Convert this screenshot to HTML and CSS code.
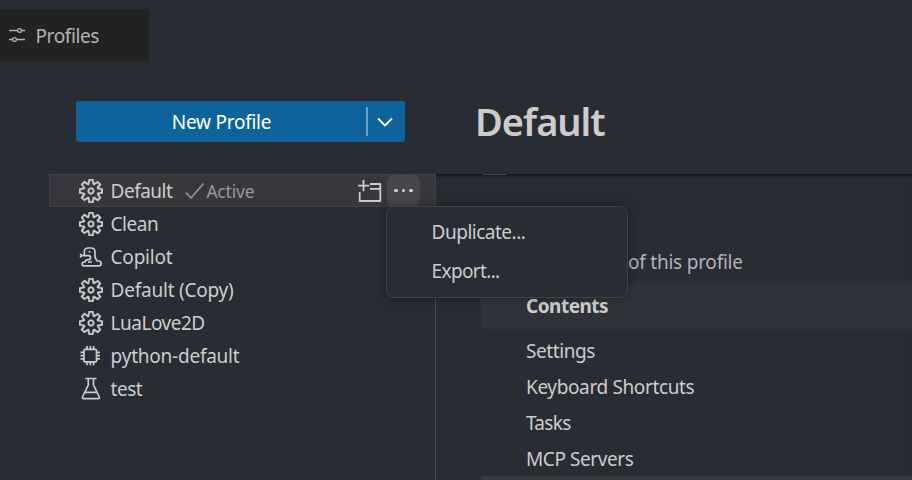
FILE: index.html
```
<!DOCTYPE html>
<html lang="en">
<head>
<meta charset="utf-8">
<title>Profiles</title>
<link rel="stylesheet" href="styles.css">
</head>
<body>
<svg class="defs" aria-hidden="true">
  <symbol id="gear" viewBox="1 1 14 14"><path fill="currentColor" stroke="currentColor" stroke-width=".15" fill-rule="evenodd" d="M9.1 4.4L8.6 2H7.4l-.5 2.4-.7.3-2-1.3-.9.8 1.3 2-.2.7-2.4.5v1.2l2.4.5.3.8-1.3 2 .8.8 2-1.3.8.3.4 2.3h1.2l.5-2.4.8-.3 2 1.3.8-.8-1.3-2 .3-.8 2.3-.4V7.4l-2.4-.5-.3-.8 1.3-2-.8-.8-2 1.3-.7-.2zM9.4 1l.5 2.4L12 2.1l2 2-1.4 2.1 2.4.4v2.8l-2.4.5L14 12l-2 2-2.1-1.4-.5 2.4H6.6l-.5-2.4L4 13.9l-2-2 1.4-2.1L1 9.4V6.6l2.4-.5L2.1 4l2-2 2.1 1.4.4-2.4h2.8zm.6 7c0 1.1-.9 2-2 2s-2-.9-2-2 .9-2 2-2 2 .9 2 2zM8 9c.6 0 1-.4 1-1s-.4-1-1-1-1 .4-1 1 .4 1 1 1z"/></symbol>
</svg>
<header class="tabs">
  <div class="tab">
    <svg class="tab-icon" viewBox="0 0 16 14"><path d="M0 2.5h8.5M12.5 2.5H16M0 11.5h3.5M7.5 11.5H16"/><circle cx="10.5" cy="2.5" r="1.9"/><circle cx="5.5" cy="11.5" r="1.9"/></svg>
    <span class="tab-label">Profiles</span>
  </div>
</header>
<main class="editor">
  <aside class="sidebar">
    <div class="new-profile">
      <span class="new-label">New Profile</span>
      <span class="new-drop"><svg class="chevron" viewBox="0 0 16 10"><path d="M1 1.5l7 7 7-7"/></svg></span>
    </div>
    <ul class="profiles">
      <li class="profile selected">
        <svg class="icon"><use href="#gear"/></svg><span class="name">Default</span>
        <svg class="check" viewBox="0 0 20 18"><path d="M1 10.5l5 5.5L18.5 1.5"/></svg><span class="active">Active</span>
        <svg class="window" viewBox="0 0 24 24"><path d="M0 6.7h11.3M5.5 1v11.3M1.7 13v9H22.3V5H12M12 9.8h10"/></svg>
        <span class="more"><i></i><i></i><i></i></span>
      </li>
      <li class="profile"><svg class="icon"><use href="#gear"/></svg><span class="name">Clean</span></li>
      <li class="profile"><svg class="icon line" viewBox="0 0 24 24"><path d="M1 9l2 1.7M1 12.4l2-1.7h2.3M5.3 10.7V7q0-4 4-4h2.7q4 0 4 4v4q0 2.5 2.2 5h1.5q2.4 0 2.4 2.4T19.700 20.800H5q-1.900 0-1.900-1.900T5 17h1q.5-2.300 3-2.300h.7q1.800 0 1.800-2t-1.800-2H5.300M9 17h4"/><circle class="dot" cx="10.500" cy="6.700" r="1"/></svg><span class="name wide">Copilot</span></li>
      <li class="profile"><svg class="icon"><use href="#gear"/></svg><span class="name wide">Default (Copy)</span></li>
      <li class="profile"><svg class="icon"><use href="#gear"/></svg><span class="name">LuaLove2D</span></li>
      <li class="profile"><svg class="icon line" viewBox="0 0 24 24"><rect x="5" y="5.3" width="12.5" height="12.5" rx="1"/><path d="M8 2v3.3M11.3 2v3.3M14.6 2v3.3M8 17.8v3.5M11.3 17.8v3.5M14.6 17.8v3.5M1.5 8.3H5M1.5 11.6H5M1.5 14.9H5M17.5 8.3H21M17.5 11.6H21M17.5 14.9H21"/></svg><span class="name wide">python-default</span></li>
      <li class="profile"><svg class="icon line" viewBox="0 0 24 24"><path d="M6.3 1.5h11.2M9.3 1.5V8L3.5 20c-.3.8 0 1.6 1 1.6h14.8c1 0 1.3-.8 1-1.6L14.5 8V1.5M6 15.3h12"/></svg><span class="name">test</span></li>
    </ul>
  </aside>
  <section class="details">
    <h1 class="title">Default</h1>
    <div class="scroll">
      <div class="clipped"></div>
      <p class="hint">of this profile</p>
      <div class="contents">
        <div class="contents-head">Contents</div>
        <div class="item">Settings</div>
        <div class="item keys">Keyboard Shortcuts</div>
        <div class="item tasks">Tasks</div>
        <div class="item">MCP Servers</div>
        <div class="next-row"></div>
      </div>
    </div>
  </section>
</main>
<div class="menu">
  <div class="menu-item">Duplicate...</div>
  <div class="menu-item export">Export...</div>
</div>
</body>
</html>
```
FILE: styles.css
```
* { box-sizing: border-box; }
body {
  margin: 0;
  width: 912px;
  height: 480px;
  overflow: hidden;
  background: #282c34;
  color: #cccccc;
  font: 19px/33px "Noto Sans", "Open Sans", sans-serif;
  letter-spacing: -0.5px;
  white-space: nowrap;
}
svg { flex: none; fill: none; stroke-linejoin: round; }
.defs { display: none; }
.tabs { height: 61px; padding-top: 9px; }
.tab {
  display: flex;
  align-items: center;
  width: 149px;
  height: 52px;
  padding-left: 9px;
  background: #222222;
  color: #b2b2b2;
}
.tab-icon { width: 16px; height: 14px; margin-right: 10.5px; stroke: currentColor; stroke-width: 1.3; }
.tab-label { padding-top: 2px; letter-spacing: -0.4px; }
.editor { display: grid; grid-template-columns: 436px 1fr; height: 419px; }
.sidebar { padding: 40px 0 0 49px; }
.new-profile {
  display: flex;
  width: 329px;
  height: 41px;
  margin: 0 0 32px 27px;
  border-radius: 3px;
  background: #0e639c;
  color: #ffffff;
  line-height: 43px;
}
.new-label { flex: 1; padding-left: 1px; text-align: center; letter-spacing: -0.25px; }
.new-drop {
  display: flex;
  align-items: center;
  justify-content: center;
  width: 39px;
  height: 29px;
  margin-top: 6px;
  padding-right: 3px;
  border-left: 2px solid #6ea1c4;
}
.chevron { width: 16px; height: 10px; stroke: #ffffff; stroke-width: 1.8; }
.profiles { height: 306px; margin: 0; padding: 0; border-right: 1px solid #48494e; list-style: none; }
.profile { display: flex; align-items: center; height: 33px; padding-left: 30px; }
.selected { margin-right: -1px; padding-left: 29px; border: 1px solid #434140; background: #38373c; }
.icon { width: 24px; height: 24px; margin-right: 7.6px; }
.name, .active { padding-top: 2px; }
.wide { letter-spacing: -0.23px; }
.line { stroke: #cccccc; stroke-width: 1.7; }
.dot { fill: #cccccc; stroke: none; }
.check { width: 20px; height: 18px; margin-left: 13px; stroke: #999999; stroke-width: 1.6; }
.active { width: 50px; margin-left: 1px; color: #999999; font-size: 17.5px; letter-spacing: -0.2px; }
.window { width: 24px; height: 24px; margin-left: 101.4px; stroke: #cccccc; stroke-width: 1.8; }
.more {
  display: flex;
  align-items: center;
  justify-content: center;
  gap: 4px;
  width: 33px;
  height: 32px;
  margin-left: 5px;
  border-radius: 7px;
  background: #46474c;
}
.more i { width: 3.5px; height: 3.5px; border-radius: 50%; background: #d4d4d4; }
.title {
  height: 113px;
  margin: 0;
  padding: 34px 0 0 39px;
  font-size: 38px;
  font-weight: 600;
  line-height: 52px;
  letter-spacing: -1px;
}
.scroll { height: 306px; box-shadow: inset 0 4px 3px -2px #15171b; }
.clipped { width: 24px; height: 1px; margin-left: 47px; background: #45464a; }
.hint { margin: 71px 0 0 192px; color: #b3b3b3; letter-spacing: -0.23px; }
.contents { margin: 4px 0 0 45px; }
.contents-head { height: 46px; margin-bottom: 4px; padding-left: 45px; background: #2f323a; font-weight: 700; line-height: 46px; }
.item { height: 36px; padding-left: 45px; line-height: 36px; letter-spacing: -0.42px; }
.keys { letter-spacing: -0.37px; }
.tasks { letter-spacing: -0.7px; }
.next-row { height: 8px; margin-top: -1px; background: #38373c; }
.menu {
  position: absolute;
  left: 386px;
  top: 206px;
  width: 242px;
  height: 92px;
  padding: 6px 0 0 44.6px;
  border: 1px solid #43423f;
  border-radius: 8px;
  background: #282c34;
  box-shadow: 0 0 10px rgba(0, 0, 0, 0.36);
}
.menu-item { height: 39px; line-height: 39px; }
.export { letter-spacing: -0.65px; }
```
